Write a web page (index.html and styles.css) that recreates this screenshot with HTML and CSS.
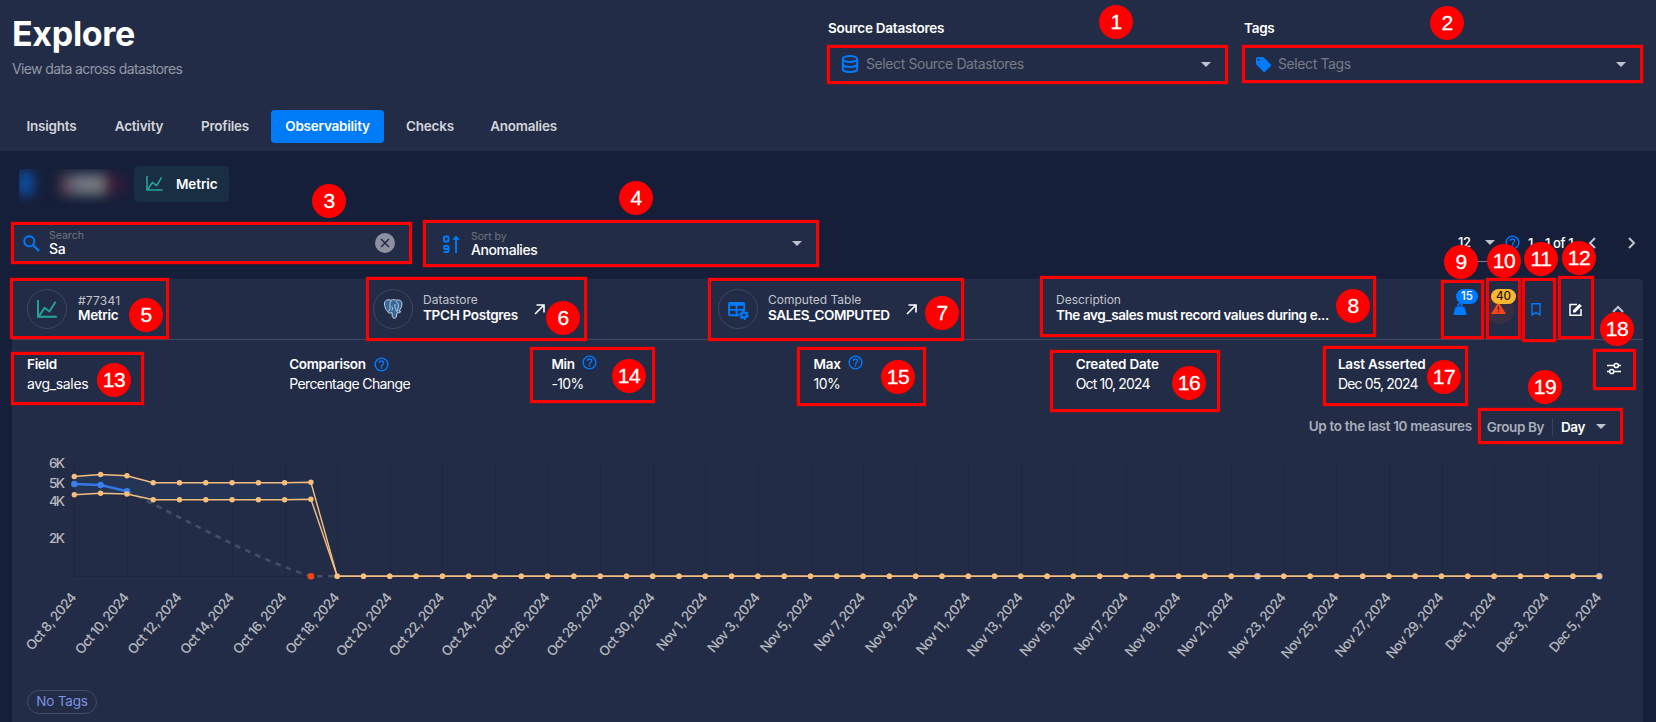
FILE: index.html
```html
<!DOCTYPE html>
<html lang="en">
<head>
<meta charset="utf-8">
<title>Explore</title>
<link rel="stylesheet" href="styles.css">
</head>
<body>
<svg class="defs" width="0" height="0">
  <symbol id="help" viewBox="0 0 24 24"><path d="M11 18h2v-2h-2v2zm1-16a10 10 0 1 0 0 20 10 10 0 0 0 0-20zm0 18a8 8 0 1 1 0-16 8 8 0 0 1 0 16zm0-14a4 4 0 0 0-4 4h2a2 2 0 1 1 4 0c0 2-3 1.750-3 5h2c0-2.250 3-2.500 3-5a4 4 0 0 0-4-4z"/></symbol>
  <symbol id="chart" viewBox="0 0 24 22"><path d="M1 0v20.500h23M2 20L9 9.500l6 4.500L22.500 2" fill="none" stroke="currentColor" stroke-width="2.300"/></symbol>
  <symbol id="arrow" viewBox="0 0 11 11"><path d="M1 10L9.500 1.500M2.500 1H10v7.500" fill="none" stroke="currentColor" stroke-width="1.600"/></symbol>
</svg>
<header class="top">
  <div class="top-row">
    <div>
      <h1 class="title">Explore</h1>
      <p class="subtitle">View data across datastores</p>
    </div>
    <div class="filters">
      <div class="filter">
        <span class="filter-label">Source Datastores</span>
        <div class="select">
          <svg class="ic-db" viewBox="0 0 18 18"><g fill="none" stroke="currentColor" stroke-width="2"><ellipse cx="9" cy="4" rx="7.200" ry="3"/><path d="M1.800 4v10c0 1.700 3.200 3 7.200 3s7.200-1.300 7.200-3V4M1.800 9c0 1.700 3.200 3 7.200 3s7.200-1.300 7.200-3"/></g></svg>
          <span class="placeholder">Select Source Datastores</span><i class="caret"></i>
        </div>
      </div>
      <div class="filter">
        <span class="filter-label">Tags</span>
        <div class="select tags">
          <svg class="ic-tag" viewBox="2 2 20 20"><path fill="currentColor" d="M21.400 11.600l-9-9A2 2 0 0 0 11 2H4a2 2 0 0 0-2 2v7c0 .550.220 1.050.590 1.420l9 9a2 2 0 0 0 2.820 0l7-7a2 2 0 0 0 0-2.820zM5.500 7a1.500 1.500 0 1 1 0-3 1.500 1.500 0 0 1 0 3z"/></svg>
          <span class="placeholder">Select Tags</span><i class="caret"></i>
        </div>
      </div>
    </div>
  </div>
  <nav class="tabs">
    <a class="tab">Insights</a><a class="tab">Activity</a><a class="tab">Profiles</a><a class="tab active">Observability</a><a class="tab">Checks</a><a class="tab">Anomalies</a>
  </nav>
</header>
<main>
  <div class="chips">
    <div class="redacted"><span class="blob blue"></span><span class="blob grey"></span></div>
    <div class="chip"><svg class="ic-chart"><use href="#chart"/></svg>Metric</div>
  </div>
  <div class="tools">
    <div class="field search">
      <svg class="ic-search" viewBox="0 0 17 17"><path d="M10.500 10.500L16 16" stroke="currentColor" stroke-width="2.300"/><circle cx="6.300" cy="6.300" r="5.100" fill="none" stroke="currentColor" stroke-width="1.900"/></svg>
      <div class="stack"><span class="hint">Search</span><span class="val">Sa</span></div>
      <svg class="ic-clear" viewBox="0 0 20 20"><circle cx="10" cy="10" r="10" fill="#8c90a0"/><path d="M6 6l8 8M14 6l-8 8" stroke="#232c46" stroke-width="1.600"/></svg>
    </div>
    <div class="field sort">
      <svg class="ic-sort" viewBox="0 0 17 18"><g fill="none" stroke="currentColor" stroke-width="1.900"><rect x="1" y="1.500" width="4.500" height="5" rx="1"/><path d="M5.500 14H2a1 1 0 0 1-1-1v-1a1 1 0 0 1 1-1h2.500a1 1 0 0 1 1 1v4a1 1 0 0 1-1 1H.500M13 18V3"/></g><path d="M9.200 4.800L13 .500l3.800 4.300z" fill="currentColor"/></svg>
      <div class="stack"><span class="hint">Sort by</span><span class="val">Anomalies</span></div>
      <i class="caret"></i>
    </div>
    <div class="pager">
      <span class="per-page"><span>12</span><i class="caret"></i></span>
      <svg class="ic-help"><use href="#help"/></svg>
      <span class="range">1 - 1 of 1</span>
      <svg class="ic-prev" viewBox="0 0 8 12"><path d="M7 1L2 6l5 5"/></svg>
      <svg class="ic-next" viewBox="0 0 8 12"><path d="M1 1l5 5-5 5"/></svg>
    </div>
  </div>
  <section class="card">
    <div class="card-head">
      <div class="entity e1">
        <span class="ring"><svg class="ic-chart"><use href="#chart"/></svg></span>
        <div class="lines"><span class="cap id">#77341</span><b>Metric</b></div>
      </div>
      <div class="entity e2">
        <span class="ring"><svg class="ic-pg" viewBox="0 0 20 20"><path d="M2 2.500C3 .500 6 .500 8 1.200 10 .400 12 .500 13.500 1.200 16 .400 19 1.500 19 4.500c0 3-1.500 6-3 7.500l2 .500c-1 1.300-2.600 1.500-4 1.300L13.500 17c-.400 3-3.700 3-4.200.500L9 13.500C7 14.500 5.500 14.500 4.500 12.500 2.500 10 .500 5.500 2 2.500z" fill="#35699c" stroke="#c9d0da" stroke-width="1"/><path d="M8 2C6.500 4 7 7 7 9.500c0 2-1 3-2 2.500M13 2c2 2 3 4.500 2 7l-.500 3M8.500 7.500c1 .500 1.500 2 .500 4M12 5c-.500 3 .500 5 2 8" fill="none" stroke="#c9d0da" stroke-width=".9"/></svg></span>
        <div class="lines"><span class="cap">Datastore</span><b>TPCH Postgres</b></div>
        <svg class="ic-open"><use href="#arrow"/></svg>
      </div>
      <div class="entity e3">
        <span class="ring"><svg class="ic-table" viewBox="0 0 22 20"><path fill-rule="evenodd" fill="currentColor" d="M2 1h14a2 2 0 0 1 2 2v7.200a6 6 0 0 0-6.500 5.800H2a2 2 0 0 1-2-2V3a2 2 0 0 1 2-2zm0 4v3.500h6V5zm8 0v3.500h6V5zm-8 5.200V14h6v-3.800zm8 0V14h1.800a6 6 0 0 1 3-3.800z"/><circle cx="16.800" cy="14.800" r="2.700" fill="none" stroke="currentColor" stroke-width="2.200"/><circle cx="16.800" cy="14.800" r="4.200" fill="none" stroke="currentColor" stroke-width="1.800" stroke-dasharray="2.200 2.200"/></svg></span>
        <div class="lines"><span class="cap">Computed Table</span><b class="table-name">SALES_COMPUTED</b></div>
        <svg class="ic-open"><use href="#arrow"/></svg>
      </div>
      <div class="entity e4">
        <div class="lines"><span class="cap">Description</span><b class="desc">The avg_sales must record values during e...</b></div>
      </div>
      <div class="actions">
        <span class="act weight"><svg viewBox="0 0 14 12"><path fill="currentColor" d="M2.500 4h2.300a2.700 2.700 0 1 1 4.400 0h2.300l2 7.200a.6.6 0 0 1-.6.800H1.100a.6.6 0 0 1-.6-.8zM7 1.200a1.200 1.200 0 1 0 0 2.400 1.200 1.200 0 0 0 0-2.400z"/></svg><span class="badge">15</span></span>
        <span class="act alert"><svg viewBox="0 0 15 12"><path d="M7.500 0L15 12H0z" fill="#ff4417"/><path d="M7.500 4.500v3.500M7.500 9v1.500" stroke="#392c3d" stroke-width="1.400"/></svg><span class="badge amber">40</span></span>
        <span class="act mark"><svg viewBox="0 0 10 13"><path d="M1 .800h8v11L5 9.800 1 11.800z" fill="none" stroke="currentColor" stroke-width="1.400"/></svg></span>
        <span class="act edit"><svg viewBox="0 0 14 13"><path d="M8 1.500H1v10.700h11V6" fill="none" stroke="currentColor" stroke-width="1.500"/><path d="M4 9.500V7.200L10.500.700l2.300 2.300L6.300 9.500z" fill="currentColor"/></svg></span>
        <span class="act fold"><svg viewBox="0 0 12 8"><path d="M1 7l5-5 5 5" fill="none" stroke="currentColor" stroke-width="2"/></svg></span>
      </div>
    </div>
    <div class="details">
      <div class="detail"><b>Field</b><span>avg_sales</span></div>
      <div class="detail"><b>Comparison<svg class="ic-help"><use href="#help"/></svg></b><span class="tight">Percentage Change</span></div>
      <div class="detail raised"><b>Min<svg class="ic-help"><use href="#help"/></svg></b><span class="tight">-10%</span></div>
      <div class="detail raised"><b>Max<svg class="ic-help"><use href="#help"/></svg></b><span class="tight">10%</span></div>
      <div class="detail"><b class="wide">Created Date</b><span class="date">Oct 10, 2024</span></div>
      <div class="detail"><b class="wide">Last Asserted</b><span class="date">Dec 05, 2024</span></div>
      <svg class="ic-tune" viewBox="0 0 14 13"><g fill="none" stroke="currentColor" stroke-width="1.500"><path d="M0 3.500h7M11.500 3.500H14M0 9.500h2.500M7 9.500h7"/><circle cx="9.300" cy="3.500" r="2.100"/><circle cx="4.700" cy="9.500" r="2.100"/></g></svg>
    </div>
    <div class="grouping">
      <span class="upto">Up to the last 10 measures</span>
      <span class="groupby">Group By</span><i class="bar"></i><span class="day">Day</span><i class="caret"></i>
    </div>
    <svg class="plot" id="plot" width="1631" height="220" viewBox="12 449 1631 220"></svg>
    <div class="card-foot"><span class="no-tags">No Tags</span></div>
  </section>
</main>
<div id="callouts"></div>
<script src="app.js"></script>
</body>
</html>
```

FILE: styles.css
```css
* { box-sizing: border-box; }
body { margin: 0; width: 1656px; height: 722px; overflow: hidden; position: relative; background: #151f39; color: #fff; font: 500 14px/18px Inter, "Noto Sans", sans-serif; letter-spacing: -0.35px; }
svg { flex: none; display: block; }
.defs { position: absolute; }
.caret { flex: none; width: 0; height: 0; border: 5.5px solid transparent; border-top-color: #c0c3cc; border-bottom: 0; }
.ic-help { fill: #007bff; width: 17px; height: 17px; }

.top { height: 151px; background: #232c46; padding: 0 13px 0 12px; }
.top-row { height: 110px; display: flex; justify-content: space-between; }
.title { margin: 13px 0 0; font: 700 34px/42px Inter, sans-serif; letter-spacing: -0.3px; }
.subtitle { margin: 5px 0 0; color: #9297a5; font-weight: 400; letter-spacing: -0.62px; }
.filters { display: flex; gap: 16px; padding-top: 19px; }
.filter { width: 400px; }
.filter + .filter { width: 399px; }
.filter-label { display: block; font-weight: 600; font-size: 13.5px; letter-spacing: -0.25px; }
.select { margin-top: 9px; height: 36px; display: flex; align-items: center; padding: 0 17px 0 13px; }
.placeholder { flex: 1; margin-left: 7px; color: #777b86; font-weight: 400; letter-spacing: -0.4px; }
.ic-db { width: 18px; height: 18px; color: #007bff; }
.tags { padding-left: 12px; }
.ic-tag { width: 15px; height: 15px; color: #007bff; }
.tabs { display: flex; gap: 6px; margin-left: -2px; }
.tab { height: 33px; width: 80px; text-align: center; line-height: 32px; font-weight: 600; font-size: 13.5px; letter-spacing: -0.22px; color: #d3d5da; border-radius: 4px; }
.tab:first-child { width: 83px; }
.tab.active { width: 113px; background: #007bf7; color: #fff; }
.tab:last-child { width: 95px; }

main { padding: 0 13px 0 12px; }
.chips { display: flex; height: 69px; padding: 15px 0 0 7px; }
.redacted { width: 110px; height: 35px; margin: 3px 5px 0 0; display: flex; overflow: hidden; align-items: center; }
.blob { filter: blur(6px); }
.blob.blue { width: 15px; height: 24px; margin: -8px 0 0 -1px; background: #1050a8; }
.blob.grey { width: 66px; height: 21px; margin: -4px 0 0 27px; background: linear-gradient(90deg, #553542, #6f7886 30%, #777 65%, #321b38 75%, #321b38); }
.chip { width: 95px; height: 36px; background: #192d43; border-radius: 4px; display: flex; align-items: center; padding: 0 0 1px 12px; gap: 13px; font-weight: 600; font-size: 13.5px; letter-spacing: -0.1px; }
.ic-chart { width: 17px; height: 15px; color: #26a69a; }

.tools { display: flex; height: 59px; gap: 13px; padding-top: 3px; }
.field { height: 39px; background: #232c46; display: flex; align-items: center; }
.search { width: 398px; padding: 1px 14px 0 11px; border-right: 1px solid #4b546c; }
.sort { width: 395px; height: 42px; margin-top: -1px; padding: 0 16px 0 20px; border-top: 1px solid #4b546c; }
.ic-search { width: 17px; height: 17px; color: #007bff; }
.ic-clear { width: 20px; height: 20px; }
.ic-sort { width: 17px; height: 18px; color: #007bff; }
.stack { flex: 1; display: flex; flex-direction: column; margin-left: 9px; }
.sort .stack { margin-left: 11px; }
.hint { font-size: 10.5px; line-height: 12px; color: #70747f; font-weight: 400; letter-spacing: 0; }
.val { line-height: 14px; letter-spacing: -0.4px; }
.pager { margin-left: auto; display: flex; align-items: center; height: 39px; font-size: 13px; padding: 0 7px 0 0; }
.per-page { width: 37px; height: 38px; margin-top: 0; border-bottom: 1px solid #7a8090; display: flex; align-items: center; justify-content: space-between; }
.pager .ic-help { margin-left: 9px; }
.range { width: 45px; margin-left: 7px; white-space: nowrap; }
.pager path { fill: none; stroke: #c0c3cc; stroke-width: 2; }
.ic-prev { width: 8px; height: 12px; margin-left: 15px; }
.ic-next { width: 8px; height: 12px; margin-left: 32px; }

.card { height: 443px; background: #232c46; border-radius: 4px 4px 0 0; }
.card-head { height: 61px; border-bottom: 1px solid #404962; display: flex; align-items: center; padding-left: 15px; }
.entity { display: flex; align-items: center; }
.e1 { width: 346px; } .e2 { width: 345px; } .e3 { width: 338px; } .e4 { width: 394px; }
.ring { width: 40px; height: 40px; flex: none; border: 1px solid #3e4760; border-radius: 50%; display: flex; align-items: center; justify-content: center; }
.ring .ic-chart { width: 20px; height: 18px; }
.ic-pg { width: 20px; height: 20px; }
.ic-table { width: 21px; height: 19px; color: #007bff; margin-top: 3px; }
.lines { margin: -2px 0 0 10px; display: flex; flex-direction: column; }
.e4 .lines { margin-left: 0; }
.lines b, .detail b { font-weight: 600; font-size: 13.5px; line-height: 17px; letter-spacing: -0.3px; white-space: nowrap; }
.lines b.desc { letter-spacing: -0.41px; }
.lines b.table-name { letter-spacing: -0.4px; }
.detail b.wide { letter-spacing: -0.2px; }
.cap { font-size: 12px; line-height: 15px; color: #c2c5cd; font-weight: 400; letter-spacing: 0; }
.id { line-height: 13px; letter-spacing: 0.2px; }
.e1 .lines { margin: 0 0 0 11px; }
.ic-open { width: 11px; height: 11px; margin: 0 0 0 16px; }
.actions { display: flex; align-items: center; flex: 1; height: 60px; }
.act { position: relative; flex: none; }
.weight { color: #007bff; margin-left: 3px; }
.weight svg { width: 14px; height: 12px; }
.alert { width: 30px; height: 30px; margin-left: 17px; border-radius: 50%; background: #392f43; padding: 8px 0 0 7px; }
.alert svg { width: 15px; height: 12px; }
.badge { position: absolute; left: 3px; top: -14px; width: 22px; height: 15px; border-radius: 8px; background: #007bff; color: #fff; font-size: 11.500px; line-height: 15px; text-align: center; letter-spacing: 0; }
.amber { left: 7px; top: -5px; width: 25px; background: #ffb52d; color: #151515; }
.mark { color: #007bff; margin-left: 17px; } .mark svg { width: 10px; height: 13px; }
.edit { margin-left: 28px; } .edit svg { width: 14px; height: 13px; }
.fold { margin-left: 29px; color: #c0c3cc; } .fold svg { width: 12px; height: 8px; }

.details { display: flex; height: 68px; padding: 16px 0 0 15px; }
.detail { width: 262.200px; display: flex; flex-direction: column; gap: 2px; }
.detail b { display: flex; align-items: center; height: 17px; }
.detail .ic-help { margin-left: 7px; }
.detail.raised .ic-help { margin: -4px 0 0 6px; }
.detail span { font-weight: 400; line-height: 18px; }
.detail .tight { letter-spacing: -0.6px; }
.detail .date { letter-spacing: -0.85px; }
.ic-tune { width: 14px; height: 13px; margin: 6px 0 0 7px; }
.grouping { height: 41px; display: flex; align-items: center; padding: 0 37px 4px 0; justify-content: flex-end; color: #a8adba; font-weight: 600; font-size: 13.500px; white-space: nowrap; letter-spacing: -0.4px; }
.upto { margin: -2px 15px 0 0; letter-spacing: -0.32px; }
.bar { width: 1px; height: 18px; background: #3a435c; margin: 0 8px; }
.day { color: #fff; width: 24px; margin-right: 11px; }
.card-foot { padding: 21px 0 0 15px; }
.no-tags { display: block; width: 70px; height: 24px; border: 1px solid #414b6d; border-radius: 12px; color: #7b93e0; text-align: center; line-height: 21px; font-size: 13.500px; font-weight: 400; letter-spacing: -0.2px; }

.grid { stroke: #1d263e; stroke-width: 1; }
.axis { fill: #b6b8be; font-size: 13.500px; letter-spacing: 0; font-weight: 500; }
.date-label { letter-spacing: -0.6px; font-size: 13.500px; }
.band { fill: #243556; }
.bound { fill: none; stroke: #f5be80; stroke-width: 1.400; }
.dot { fill: #f9be7c; }
.measure { fill: none; stroke: #3478e4; stroke-width: 2.600; }
.mdot { fill: #3880f0; }
.gap { fill: none; stroke: #444e67; stroke-width: 2.600; stroke-dasharray: 5.500 5.500; }
.anomaly { fill: #ff4417; }

.frame { position: absolute; border: 3px solid #f00; box-shadow: 0 0 1px #f00; pointer-events: none; }
.num { position: absolute; width: 34px; height: 34px; border-radius: 50%; background: #f00; color: #fff; font: 400 21px/34px "Liberation Sans", Arial, sans-serif; letter-spacing: -0.5px; -webkit-text-stroke: 0.3px #fff; text-align: center; }
```

FILE: app.js
```js
// Chart: bounds, measured values and date labels
var x0 = 74.3, step = 26.293, zero = 576.3, days = 58;
var upper = [476.5, 474.5, 475.8, 482.7, 482.7, 482.7, 482.7, 482.7, 482.7, 482.2];
var lower = [494.7, 493.2, 494, 499.7, 499.7, 499.7, 499.7, 499.7, 499.7, 499.2];
var measured = [484, 485, 491.2];
var X = function (i) { return +(x0 + i * step).toFixed(1); };
for (var k = 10; k <= days; k++) { upper.push(zero); lower.push(zero); }
var path = function (a) { return a.map(function (y, i) { return X(i) + ',' + y; }); };
var s = '';
for (var i = 0; i <= days; i += 2) {
  var gx = Math.round(X(i)) + 0.5;
  s += '<line class="grid" x1="' + gx + '" x2="' + gx + '" y1="464" y2="577"/>';
}
s += '<line class="grid" x1="74" x2="1600" y1="576.5" y2="576.5"/>';
s += '<polygon class="band" points="' + path(upper).concat(path(lower).reverse()).join(' ') + '"/>';
s += '<path class="gap" d="M127 491.200C185 519 255 559 311 576.300H337"/>';
s += '<polyline class="measure" points="' + path(measured).join(' ') + '"/>';
measured.forEach(function (y, i) { s += '<circle class="mdot" r="3.2" cx="' + X(i) + '" cy="' + y + '"/>'; });
[45, 58].forEach(function (i) { s += '<circle class="mdot" r="3.5" cx="' + X(i) + '" cy="' + zero + '"/>'; });
[upper, lower].forEach(function (a) {
  s += '<polyline class="bound" points="' + path(a).join(' ') + '"/>';
  a.forEach(function (y, i) { s += '<circle class="dot" r="2.7" cx="' + X(i) + '" cy="' + y + '"/>'; });
});
s += '<circle class="anomaly" r="3.3" cx="311" cy="576.3"/>';
[['6K', 468], ['5K', 488], ['4K', 506], ['2K', 543]].forEach(function (t) {
  s += '<text class="axis" text-anchor="end" textLength="16" x="65" y="' + t[1] + '">' + t[0] + '</text>';
});
for (i = 0; i <= days; i += 2) {
  var d = new Date(2024, 9, 8 + i);
  var label = ['Oct', 'Nov', 'Dec'][d.getMonth() - 9] + ' ' + d.getDate() + ', 2024';
  s += '<text class="axis date-label" text-anchor="end" transform="translate(' + (X(i) + 2.5) + ' 598) rotate(-50)">' + label + '</text>';
}
document.getElementById('plot').innerHTML = s;

// Numbered callouts: left, top, right, bottom of the frame, then centre of the number
var marks = [
  [827, 45, 1228, 84, 1116, 22], [1242, 45, 1643, 83, 1447, 23], [11, 222, 412, 264, 329, 201],
  [423, 220, 819, 267, 636, 198], [10, 278, 169, 339, 146, 315], [366, 277, 587, 341, 563, 318],
  [708, 278, 964, 341, 942, 313], [1040, 276, 1376, 337, 1353, 305.5], [1441, 280, 1484, 339, 1461, 262],
  [1486, 278, 1521, 339, 1504, 261], [1522, 278, 1556, 342, 1541, 259], [1558, 276, 1594, 339, 1579, 258],
  [11, 352, 144, 405, 114, 380], [530, 347, 655, 403, 629, 376], [797, 347, 926, 406, 898, 377],
  [1050, 350, 1220, 412, 1189, 383], [1323, 346, 1468, 406, 1444, 377], [1593, 349, 1636, 390, 1617, 329],
  [1478, 408, 1623, 444, 1545, 387]
];
document.getElementById('callouts').innerHTML = marks.map(function (m) {
  return '<div class="frame" style="left:' + m[0] + 'px;top:' + m[1] + 'px;width:' + (m[2] - m[0]) + 'px;height:' + (m[3] - m[1]) + 'px"></div>';
}).join('') + marks.map(function (m, i) {
  return '<div class="num" style="left:' + (m[4] - 17) + 'px;top:' + (m[5] - 17) + 'px">' + (i + 1) + '</div>';
}).join('');
```
